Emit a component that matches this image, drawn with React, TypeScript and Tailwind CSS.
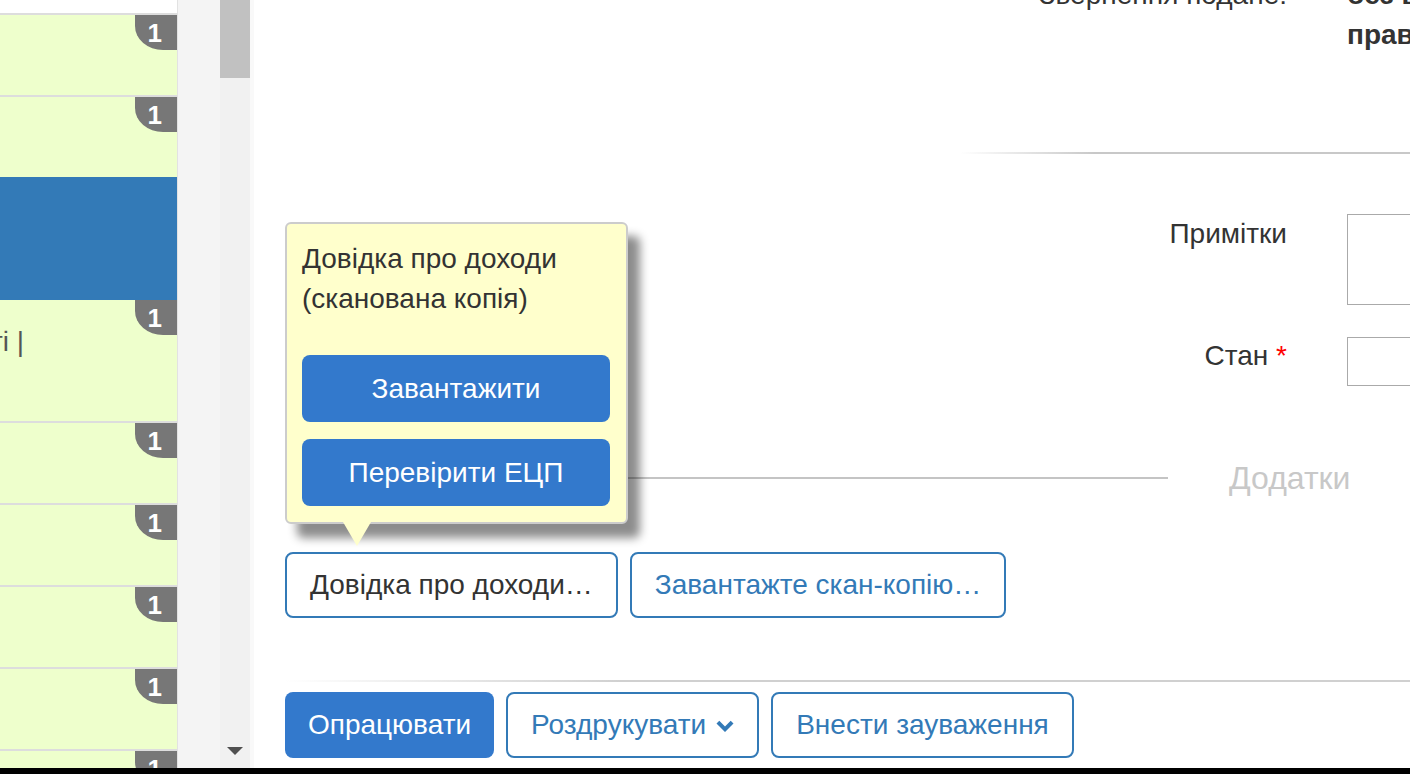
import React from 'react';

const font = "font-['Liberation_Sans',Arial,sans-serif]";

const Badge = () => (
    <div className="absolute top-0 right-0 w-[42px] h-[35px] bg-[#777777] rounded-bl-[28px_24px] flex items-center justify-end pr-[15px] text-white font-bold text-[26px] leading-none">
        1
    </div>
);

const Row = ({ h, border = true, children }: { h: number; border?: boolean; children?: React.ReactNode }) => (
    <div className={border ? 'border-t-2 border-[#dddddd]' : ''}>
        <div className="relative bg-[#eeffcc] overflow-hidden" style={{ height: h }}>
            <Badge />
            {children}
        </div>
    </div>
);

const Sidebar = () => (
    <div className="flex h-full">
        <div className="w-[178px] h-full border-r border-[#e2e2e2] flex flex-col overflow-hidden">
            <div className="h-[13px] bg-white" />
            <Row h={80} />
            <Row h={80} />
            <div className="h-[123px] bg-[#337ab7]" />
            <Row h={121} border={false}>
                <div className="pt-[22px] ml-[-10px] text-[28px] leading-[40px] text-[#555555] whitespace-nowrap">ті |</div>
            </Row>
            <Row h={80} />
            <Row h={80} />
            <Row h={80} />
            <Row h={80} />
            <Row h={17} />
        </div>
        <div className="w-[42px] h-full bg-[#f4f4f4]" />
        <div className="w-[30px] h-full bg-[#f1f1f1] flex flex-col justify-between">
            <div className="h-[78px] bg-[#c1c1c1]" />
            <div className="flex justify-center pb-[13px]">
                <div className="w-0 h-0 border-l-[8px] border-r-[8px] border-t-[8px] border-l-transparent border-r-transparent border-t-[#505050]" />
            </div>
        </div>
        <div className="w-[4px] h-full bg-[#f9f9f9]" />
    </div>
);

// heavy chevron, like the icon-font one in the reference
const ChevronDown = () => (
    <svg viewBox="0 0 18 13" width="18" height="13" className="shrink-0 w-[18px] h-[13px] ml-[10px] mt-[3px]" fill="currentColor">
        <path d="M0.5 3.6 L3.3 0.8 L9 6.5 L14.7 0.8 L17.5 3.6 L9 12.1 Z" />
    </svg>
);

const outlineBtn = 'shrink-0 h-[66px] px-[23px] border-2 border-[#337ab7] rounded-[8px] bg-white flex items-center whitespace-nowrap';

const Popover = () => (
    <div className="absolute left-[31px] top-[222px] w-[343px] h-[302px]">
        <div className="relative h-full bg-[#ffffcc] border-2 border-[#cccccc] rounded-[6px] shadow-[12px_14px_10px_rgba(0,0,0,0.45)] pt-[15px] pl-[15px] pr-[16px]">
            <div className="text-[28px] leading-[40px] text-[#333333]">
                <div>Довідка про доходи</div>
                <div>(сканована копія)</div>
            </div>
            <button className="mt-[36px] w-full h-[67px] bg-[#3379cc] rounded-[8px] text-white text-[28px]">Завантажити</button>
            <button className="mt-[17px] w-full h-[67px] bg-[#3379cc] rounded-[8px] text-white text-[28px]">Перевірити ЕЦП</button>
        </div>
        <div className="absolute left-[58px] top-[300px] w-0 h-0 border-l-[14px] border-r-[14px] border-t-[24px] border-l-transparent border-r-transparent border-t-[#ffffcc]" />
    </div>
);

export default function App() {
    return (
        <div className={`w-[1410px] h-[774px] overflow-hidden bg-white flex flex-col ${font}`}>
            <div className="flex h-[768px]">
                <Sidebar />
                <div className="relative flex-1 h-full overflow-hidden">
                    <div className="pl-[31px] w-[1300px] text-[28px] leading-[40px] text-[#333333]">
                        <div className="mt-[-25px] flex">
                            <div className="w-[1032px] shrink-0 text-right pr-[30px]">Звернення подане:</div>
                            <div className="pl-[30px] font-bold whitespace-nowrap">
                                <div>без втручання</div>
                                <div>правоохоронних органів</div>
                            </div>
                        </div>
                        <div className="mt-[97px] w-[1125px] h-[2px] bg-[linear-gradient(to_right,transparent_0%,transparent_60%,#c8c8c8_72%)]" />

                        <div className="mt-[60px] flex">
                            <div className="w-[1032px] shrink-0 text-right pr-[30px]">Примітки</div>
                            <div className="pl-[30px]">
                                <div className="w-[300px] h-[91px] border border-[#aaaaaa] bg-white" />
                            </div>
                        </div>
                        <div className="mt-[32px] flex">
                            <div className="w-[1032px] shrink-0 text-right pr-[30px] mt-[-1px]">
                                Стан <span className="text-[#ff0000]">*</span>
                            </div>
                            <div className="pl-[30px]">
                                <div className="w-[300px] h-[49px] border border-[#aaaaaa] bg-white" />
                            </div>
                        </div>

                        <div className="mt-[72px] flex items-center h-[40px]">
                            <div className="w-[883px] h-[2px] bg-[#c4c4c4]" />
                            <div className="ml-[61px] text-[32px] text-[#c8c8c8]">Додатки</div>
                        </div>

                        <div className="mt-[54px] flex gap-[12px]">
                            <button className={`${outlineBtn} text-[#333333]`}>Довідка про доходи…</button>
                            <button className={`${outlineBtn} text-[#337ab7]`}>Завантажте скан-копію…</button>
                        </div>

                        <div className="mt-[62px] w-[1125px] h-[2px] bg-[linear-gradient(to_right,transparent_0%,#d0d0d0_30%)]" />

                        <div className="mt-[10px] flex gap-[12px]">
                            <button className="shrink-0 h-[66px] px-[23px] rounded-[8px] bg-[#3379cc] text-white whitespace-nowrap">Опрацювати</button>
                            <button className={`${outlineBtn} text-[#337ab7]`}>
                                Роздрукувати
                                <ChevronDown />
                            </button>
                            <button className={`${outlineBtn} text-[#337ab7]`}>Внести зауваження</button>
                        </div>
                    </div>
                    <Popover />
                </div>
            </div>
            <div className="h-[6px] bg-black" />
        </div>
    );
}
